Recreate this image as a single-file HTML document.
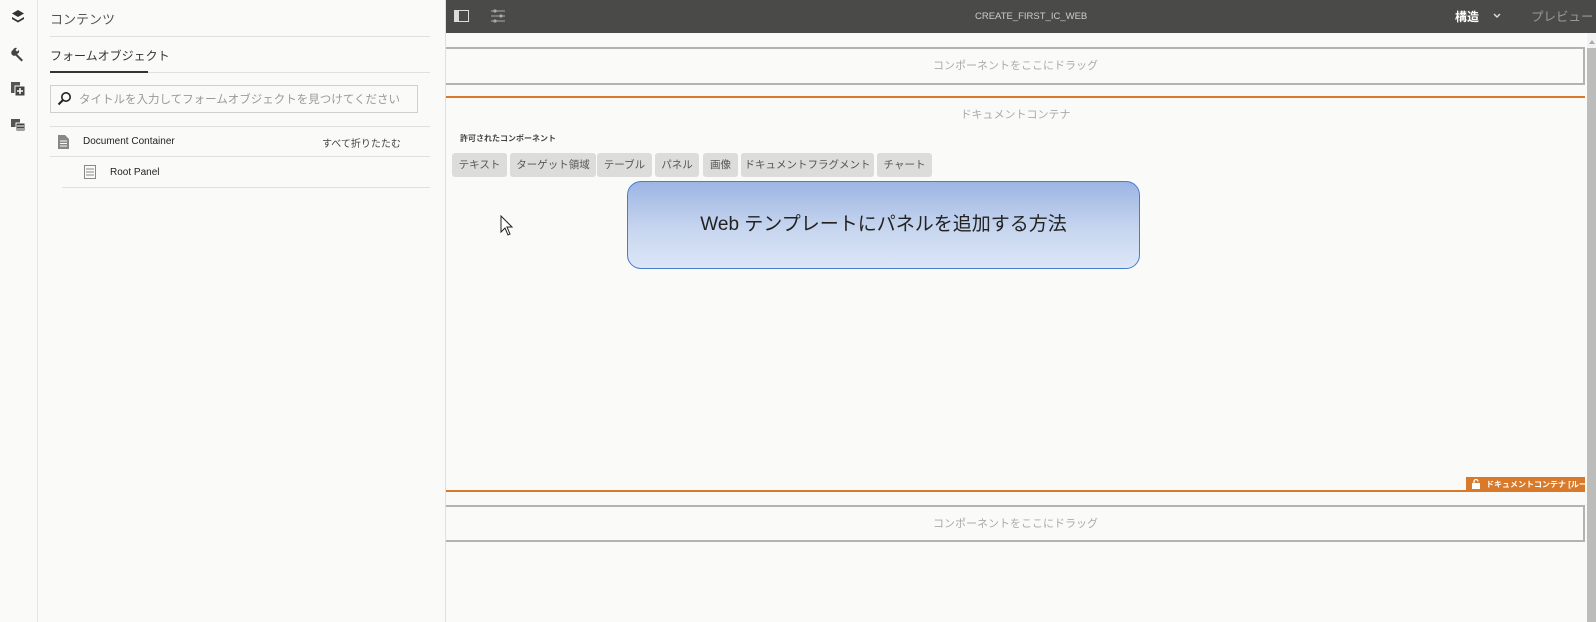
<!DOCTYPE html>
<html><head><meta charset="utf-8"><style>
*{margin:0;padding:0;box-sizing:border-box}
body{width:1596px;height:622px;overflow:hidden;background:#fafbf9;font-family:"Liberation Sans","Noto Sans CJK JP",sans-serif;position:relative;color:#333}
.a{position:absolute}
.hl{position:absolute;height:1px;background:#e0e0e0}
.btn{position:absolute;top:153px;height:24px;background:#dcdcda;border-radius:3px;font-size:10.5px;color:#555;text-align:center;line-height:24px;white-space:nowrap}
</style></head><body>
<div class="a" style="left:37px;top:0;width:1px;height:622px;background:#e4e4e4"></div>
<svg class="a" style="left:10px;top:9px" width="16" height="16" viewBox="0 0 16 16"><path d="M8 1L14 4.5 8 8 2 4.5Z" fill="#333"/><path d="M2 8L8 11.5 14 8 14 10 8 13.5 2 10Z" fill="#333"/></svg>
<svg class="a" style="left:10px;top:46px" width="16" height="16" viewBox="0 0 16 16"><path d="M3 4a3 3 0 0 1 4-2L5.5 4 7 5.5 9 4a3 3 0 0 1-2 4l6 6-1.5 1.5-6-6A3 3 0 0 1 3 4Z" fill="#444"/></svg>
<svg class="a" style="left:10px;top:81px" width="16" height="16" viewBox="0 0 16 16"><rect x="1" y="1" width="9" height="11" fill="#555"/><rect x="5" y="5" width="10" height="10" fill="#444" stroke="#fafbf9"/><path d="M10 7v6M7 10h6" stroke="#fff" stroke-width="1.5"/></svg>
<svg class="a" style="left:10px;top:117px" width="16" height="16" viewBox="0 0 16 16"><rect x="1" y="2" width="9" height="8" fill="#555"/><rect x="6" y="6" width="9" height="8" fill="#444" stroke="#fafbf9"/><path d="M7 9h7M7 12h7" stroke="#fff"/></svg>
<div class="a" style="left:445px;top:0;width:1px;height:622px;background:#e0e0e0"></div>
<div class="a" style="left:50px;top:9px;font-size:13px;color:#555">コンテンツ</div>
<div class="hl" style="left:50px;top:36px;width:380px"></div>
<div class="a" style="left:50px;top:47px;font-size:12px;color:#333">フォームオブジェクト</div>
<div class="hl" style="left:50px;top:72px;width:380px"></div>
<div class="a" style="left:50px;top:71px;width:98px;height:2px;background:#333"></div>
<div class="a" style="left:50px;top:85px;width:368px;height:28px;border:1px solid #d0d0d0;background:#fafbf9"></div>
<svg class="a" style="left:57px;top:91px" width="15" height="15" viewBox="0 0 15 15"><circle cx="9" cy="6" r="4.2" fill="none" stroke="#222" stroke-width="1.6"/><path d="M6 9L1.5 13.5" stroke="#222" stroke-width="2"/></svg>
<div class="a" style="left:79px;top:91px;font-size:11.5px;color:#999">タイトルを入力してフォームオブジェクトを見つけてください</div>
<div class="hl" style="left:50px;top:126px;width:380px"></div>
<svg class="a" style="left:58px;top:135px" width="11" height="14" viewBox="0 0 11 14"><path d="M0 0h7l4 4v10H0Z" fill="#888"/><path d="M2 6h7M2 8.5h7M2 11h7" stroke="#fafbf9"/></svg>
<div class="a" style="left:83px;top:136px;font-size:10px;color:#222">Document Container</div>
<div class="a" style="left:322px;top:135px;font-size:10px;color:#444">すべて折りたたむ</div>
<div class="hl" style="left:50px;top:156px;width:380px"></div>
<svg class="a" style="left:84px;top:165px" width="12" height="14" viewBox="0 0 12 14"><rect x="0.5" y="0.5" width="11" height="13" fill="none" stroke="#888"/><path d="M2 4h8M2 7h8M2 10h8" stroke="#888"/></svg>
<div class="a" style="left:110px;top:167px;font-size:10px;color:#222">Root Panel</div>
<div class="hl" style="left:62px;top:187px;width:368px"></div>
<div class="a" style="left:446px;top:0;width:1150px;height:33px;background:#4a4b48"></div>
<svg class="a" style="left:454px;top:9px" width="16" height="14" viewBox="0 0 16 14"><rect x="0.5" y="1.5" width="14" height="11" fill="none" stroke="#ddd"/><rect x="1" y="2" width="4" height="10" fill="#ddd"/></svg>
<svg class="a" style="left:490px;top:8px" width="16" height="16" viewBox="0 0 16 16"><path d="M1 3h14M1 8h14M1 13h14" stroke="#aaa"/><circle cx="5" cy="3" r="1.6" fill="#aaa"/><circle cx="11" cy="8" r="1.6" fill="#aaa"/><circle cx="5" cy="13" r="1.6" fill="#aaa"/></svg>
<div class="a" style="left:975px;top:11px;font-size:9.5px;color:#ccc">CREATE_FIRST_IC_WEB</div>
<div class="a" style="left:1455px;top:8px;font-size:12px;color:#fff;font-weight:bold">構造</div>
<svg class="a" style="left:1493px;top:13px" width="8" height="6" viewBox="0 0 8 6"><path d="M1 1l3 3 3-3" fill="none" stroke="#ddd" stroke-width="1.4"/></svg>
<div class="a" style="left:1531px;top:6px;font-size:12.5px;color:#999">プレビュー</div>
<div class="a" style="left:1587px;top:33px;width:9px;height:589px;background:#f2f2f2"></div>
<div class="a" style="left:1587px;top:48px;width:9px;height:574px;background:#bcbcbb"></div>
<div class="a" style="left:1589px;top:40px;width:0;height:0;border-left:3px solid transparent;border-right:3px solid transparent;border-bottom:4px solid #aaa"></div>
<div class="a" style="left:446px;top:47px;width:1139px;height:38px;border:2px solid #b3b3b1;border-left:none"></div>
<div class="a" style="left:446px;top:57px;width:1139px;text-align:center;font-size:11px;color:#aaa">コンポーネントをここにドラッグ</div>
<div class="a" style="left:446px;top:96px;width:1139px;height:2px;background:#d97a2b"></div>
<div class="a" style="left:446px;top:106px;width:1139px;text-align:center;font-size:11px;color:#aaa">ドキュメントコンテナ</div>
<div class="a" style="left:460px;top:133px;font-size:8px;color:#444;font-weight:bold">許可されたコンポーネント</div>
<div class="btn" style="left:452px;width:55px">テキスト</div>
<div class="btn" style="left:510px;width:86px">ターゲット領域</div>
<div class="btn" style="left:597px;width:55px">テーブル</div>
<div class="btn" style="left:655px;width:44px">パネル</div>
<div class="btn" style="left:703px;width:35px">画像</div>
<div class="btn" style="left:741px;width:133px">ドキュメントフラグメント</div>
<div class="btn" style="left:877px;width:55px">チャート</div>
<svg class="a" style="left:500px;top:215px" width="14" height="22" viewBox="0 0 14 22"><path d="M1 1v16l4-4 3 7 2-1-3-7h5Z" fill="#fff" stroke="#222"/></svg>
<div class="a" style="left:627px;top:181px;width:513px;height:88px;border:1px solid #4a7ccc;border-radius:14px;background:linear-gradient(#9db5e4,#c7d6ef 55%,#dce6f7);text-align:center;line-height:86px;font-size:19px;color:#222">Web テンプレートにパネルを追加する方法</div>
<div class="a" style="left:446px;top:490px;width:1139px;height:2px;background:#d97a2b"></div>
<div class="a" style="left:1466px;top:477px;width:119px;height:15px;background:#d97a2b;color:#fff;font-size:8px;font-weight:bold;line-height:15px;padding-left:20px;white-space:nowrap;overflow:hidden">ドキュメントコンテナ [ルー</div>
<svg class="a" style="left:1472px;top:479px" width="8" height="10" viewBox="0 0 8 10"><rect x="0" y="4" width="8" height="6" fill="#fff"/><path d="M2 4V2.5a2 2 0 0 1 4 0" fill="none" stroke="#fff" stroke-width="1.3"/></svg>
<div class="a" style="left:446px;top:505px;width:1139px;height:37px;border:2px solid #b3b3b1;border-left:none"></div>
<div class="a" style="left:446px;top:515px;width:1139px;text-align:center;font-size:11px;color:#aaa">コンポーネントをここにドラッグ</div>
</body></html>
